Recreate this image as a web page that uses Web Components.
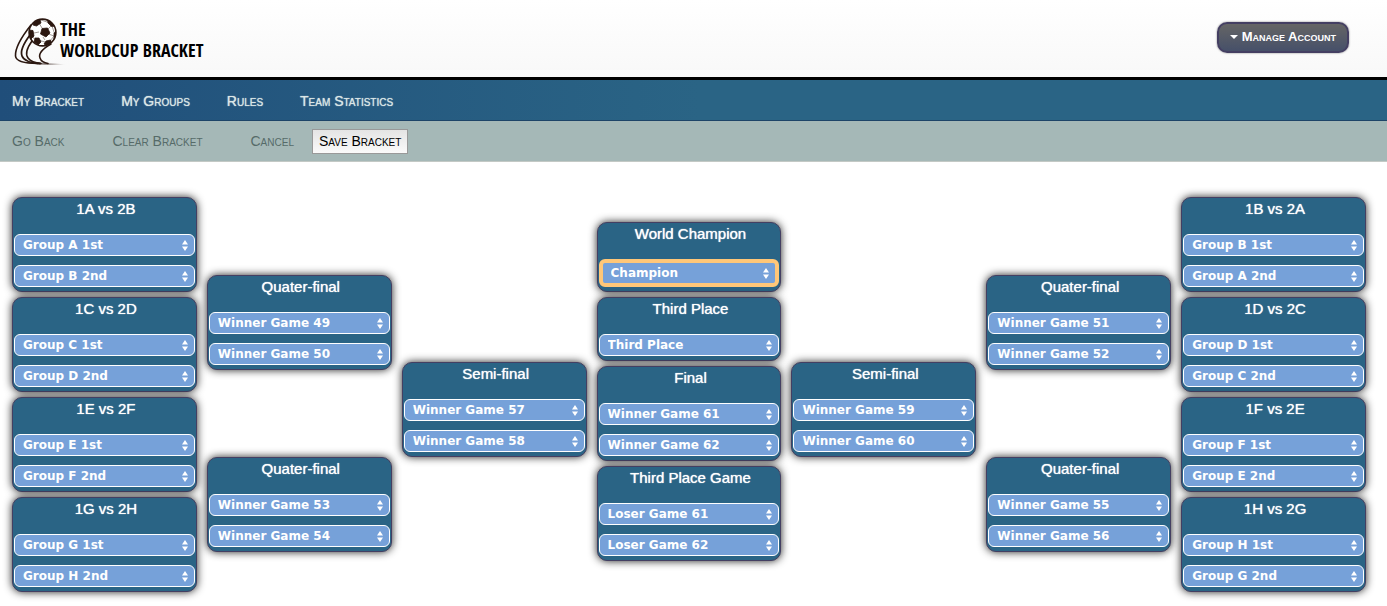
<!DOCTYPE html>
<html lang="en">
<head>
<meta charset="utf-8">
<title>The Worldcup Bracket</title>
<style>
  body { margin: 0; background: #fff; font-family: "Liberation Sans", Arial, sans-serif; }
</style>
</head>
<body>
<site-header></site-header>
<site-nav>
  <nav-link href="#bracket">My Bracket</nav-link>
  <nav-link href="#groups">My Groups</nav-link>
  <nav-link href="#rules">Rules</nav-link>
  <nav-link href="#stats">Team Statistics</nav-link>
</site-nav>
<action-bar></action-bar>
<bracket-board>
  <bracket-round>
    <bracket-game heading="1A vs 2B" teams="Group A 1st,Group B 2nd"></bracket-game>
    <bracket-game heading="1C vs 2D" teams="Group C 1st,Group D 2nd"></bracket-game>
    <bracket-game heading="1E vs 2F" teams="Group E 1st,Group F 2nd"></bracket-game>
    <bracket-game heading="1G vs 2H" teams="Group G 1st,Group H 2nd"></bracket-game>
  </bracket-round>
  <bracket-round stage="quarter">
    <bracket-game heading="Quater-final" teams="Winner Game 49,Winner Game 50"></bracket-game>
    <bracket-game heading="Quater-final" teams="Winner Game 53,Winner Game 54"></bracket-game>
  </bracket-round>
  <bracket-round stage="semi">
    <bracket-game heading="Semi-final" teams="Winner Game 57,Winner Game 58"></bracket-game>
  </bracket-round>
  <bracket-round stage="final">
    <bracket-game heading="World Champion" teams="Champion" champion></bracket-game>
    <bracket-game heading="Third Place" teams="Third Place"></bracket-game>
    <bracket-game heading="Final" teams="Winner Game 61,Winner Game 62"></bracket-game>
    <bracket-game heading="Third Place Game" teams="Loser Game 61,Loser Game 62"></bracket-game>
  </bracket-round>
  <bracket-round stage="semi">
    <bracket-game heading="Semi-final" teams="Winner Game 59,Winner Game 60"></bracket-game>
  </bracket-round>
  <bracket-round stage="quarter">
    <bracket-game heading="Quater-final" teams="Winner Game 51,Winner Game 52"></bracket-game>
    <bracket-game heading="Quater-final" teams="Winner Game 55,Winner Game 56"></bracket-game>
  </bracket-round>
  <bracket-round>
    <bracket-game heading="1B vs 2A" teams="Group B 1st,Group A 2nd"></bracket-game>
    <bracket-game heading="1D vs 2C" teams="Group D 1st,Group C 2nd"></bracket-game>
    <bracket-game heading="1F vs 2E" teams="Group F 1st,Group E 2nd"></bracket-game>
    <bracket-game heading="1H vs 2G" teams="Group H 1st,Group G 2nd"></bracket-game>
  </bracket-round>
</bracket-board>
<script>
const define = (name, html, setup) => customElements.define(name, class extends HTMLElement {
  constructor() {
    super();
    this.attachShadow({ mode: 'open' });
  }
  connectedCallback() {
    this.shadowRoot.innerHTML = html;
    if (setup) setup(this, this.shadowRoot);
  }
});

define('site-logo', `
  <style>
    :host { display: flex; align-items: flex-start; }
    svg { display: block; flex: none; overflow: visible; }
    .name { margin: 2px 0 0; font: bold 18px/21px "Open Sans Condensed", "Liberation Sans Narrow", sans-serif; color: #000; white-space: pre; }
  </style>
  <svg width="46" height="50" viewBox="0 0 46 50" aria-hidden="true">
    <defs>
      <clipPath id="ball"><circle cx="28.5" cy="15.5" r="13.4"/></clipPath>
      <linearGradient id="fade"><stop stop-color="#2b1710"/><stop offset="1" stop-color="#2b1710" stop-opacity="0"/></linearGradient>
    </defs>
    <g fill="none" stroke="#2b1710" stroke-linecap="round">
      <path stroke-width="1.6" d="M17 8C9 18 1 31 1.5 39C2 45 12 46.5 24 46.5"/>
      <path stroke-width="1.8" d="M16 18C10 26 6 34 8 39C10 44 17 46 26 46.5"/>
      <path stroke-width="1.6" d="M18 24C13 31 11 37 14 41C17 45 21 46 27 46.5"/>
      <path stroke-width="1.6" d="M37 27C30 31 24 36 26 41C27 44 30 46 34 46.5"/>
    </g>
    <path d="M10 45C24 46 38 46 52 47.5C36 48.5 20 48 10 45Z" fill="url(#fade)"/>
    <circle cx="28.5" cy="15.5" r="13.4" fill="#fff"/>
    <g clip-path="url(#ball)">
      <path fill="none" stroke="#8b817c" stroke-width="0.8" d="M28 11L25 6M34 12L37 9M34.5 17L40 19M29 20L31 23M25 15L20 16M20 8L25 5M18 13L20 22M24 23L31 25M36 24L40 19M38 9L41 18M27 3L36 6"/>
      <g fill="#2b1710" stroke="#2b1710" stroke-width="0.8" stroke-linejoin="round">
        <path d="M28 11.5L33.5 11L36 16L32 20L26.5 17Z"/>
        <path d="M20 5L26 2.5L27 6L22.5 9L19 8Z"/>
        <path d="M33.5 2L38 4L41 9L37.5 9.5L34 6Z"/>
        <path d="M15 13L19 13.5L20 19L17 22L14 18Z"/>
        <path d="M21 21L25 21L27 25L24 28L20 25Z"/>
        <path d="M32 24L36.5 23L38 27L33 29L30 27Z"/>
        <path d="M40 16L43 14L43 21L40 22Z"/>
      </g>
    </g>
    <circle cx="28.5" cy="15.5" r="13.4" fill="none" stroke="#2b1710" stroke-width="1.6"/>
  </svg>
  <p class="name">THE\nWORLDCUP BRACKET</p>
`);

define('site-header', `
  <style>
    :host { display: flex; justify-content: space-between; align-items: flex-start; box-sizing: border-box; min-height: 80px; padding: 17px 38px 0 14px; border-bottom: 3px solid #000; background: linear-gradient(#fff, #f8f8f8); }
    button { display: flex; align-items: center; gap: 4px; height: 31px; margin: 5px 0 0; padding: 0 11px 2px; border: 2px solid #443f62; border-radius: 10px; background: linear-gradient(#656565, #465069); box-shadow: 0 0 2px #777; color: #fff; font: bold 13px/20px "Liberation Sans", Arial, sans-serif; font-variant: small-caps; }
  </style>
  <site-logo></site-logo>
  <button type="button"><svg width="8" height="4" viewBox="0 0 8 4" aria-hidden="true"><path d="M0 0H8L4 4Z" fill="#fff"/></svg><span>Manage Account</span></button>
`);

define('site-nav', `
  <style>
    :host { display: block; background: linear-gradient(90deg, #204e7a, #2a6485 700px); border-bottom: 1px solid #1d4468; }
    nav { display: flex; gap: 37px; padding: 2px 12px 0; }
  </style>
  <nav><slot></slot></nav>
`);

define('nav-link', `
  <style>
    :host { display: block; }
    a { display: block; color: #dbe6e6; text-decoration: none; font-size: 14px; line-height: 38px; font-variant: small-caps; white-space: nowrap; text-shadow: 0 0 1px #dbe6e6; }
  </style>
  <a><slot></slot></a>
`, (host, root) => { root.querySelector('a').href = host.getAttribute('href'); });

define('action-bar', `
  <style>
    :host { display: flex; align-items: center; height: 40px; padding: 0 12px; background: #a5b8b7; border-bottom: 1px solid #c3c9c5; }
    a, button { font: 14px/20px "Liberation Sans", Arial, sans-serif; font-variant: small-caps; white-space: nowrap; }
    a { color: #566b69; text-decoration: none; margin-right: 48px; }
    a:last-of-type { margin-right: 18px; }
    button { height: 25px; padding: 0 6px; border: 1px solid #999; background: linear-gradient(#e4e4e4, #fafafa); color: #000; }
  </style>
  <a href="#back">Go Back</a><a href="#clear">Clear Bracket</a><a href="#cancel">Cancel</a>
  <button type="button">Save Bracket</button>
`);

define('bracket-board', `
  <style>
    :host { display: grid; grid-template-columns: repeat(7, minmax(0, 1fr)); gap: 10px; align-items: start; padding: 35px 21px 14px 12px; }
  </style>
  <slot></slot>
`);

define('bracket-round', `
  <style>
    :host { display: flex; flex-direction: column; gap: 5px; }
    :host([stage="quarter"]) { gap: 87px; padding-top: 78px; }
    :host([stage="semi"]) { padding-top: 165px; }
    :host([stage="final"]) { padding-top: 25px; }
  </style>
  <slot></slot>
`);

define('bracket-game', `
  <style>
    :host { display: block; padding: 1px 1px 4px; border: 1px solid #443f62; border-radius: 10px; background: #2a6485; box-shadow: 0 0 8px #222; }
    h2 { margin: 0 0 15px; padding-left: 3px; color: #fff; font: 15px/20px "Liberation Sans", Arial, sans-serif; text-align: center; text-shadow: 0 0 1px #fff; }
    .picks { display: grid; gap: 9px; }
  </style>
  <h2></h2>
  <div class="picks"></div>
`, (host, root) => {
  root.querySelector('h2').textContent = host.getAttribute('heading');
  for (const team of host.getAttribute('teams').split(',')) {
    const pick = document.createElement('team-select');
    pick.setAttribute('team', team);
    if (host.hasAttribute('champion')) pick.setAttribute('champion', '');
    root.querySelector('.picks').append(pick);
  }
});

define('team-select', `
  <style>
    :host { display: grid; align-items: center; }
    select, svg { grid-area: 1 / 1; }
    select { appearance: none; width: 100%; height: 22px; margin: 0; padding: 0 20px 1px 8px; border: 1px solid #fff; border-radius: 6px; background: #76a1d9; color: #fff; font: bold 12px/18px "DejaVu Sans", Verdana, sans-serif; outline: none; }
    svg { justify-self: end; margin-right: 7px; pointer-events: none; }
    :host([champion]) select { height: 28px; border: 4px solid #ffc778; }
    :host([champion]) svg { margin-right: 10px; }
  </style>
  <select><option></option></select>
  <svg width="6" height="11" viewBox="0 0 6 11" aria-hidden="true"><path d="M3 0L6 4.5H0ZM3 11L0 6.5H6Z" fill="#fff"/></svg>
`, (host, root) => {
  const team = host.getAttribute('team');
  root.querySelector('option').textContent = team;
  root.querySelector('select').setAttribute('aria-label', team);
});
</script>
</body>
</html>
